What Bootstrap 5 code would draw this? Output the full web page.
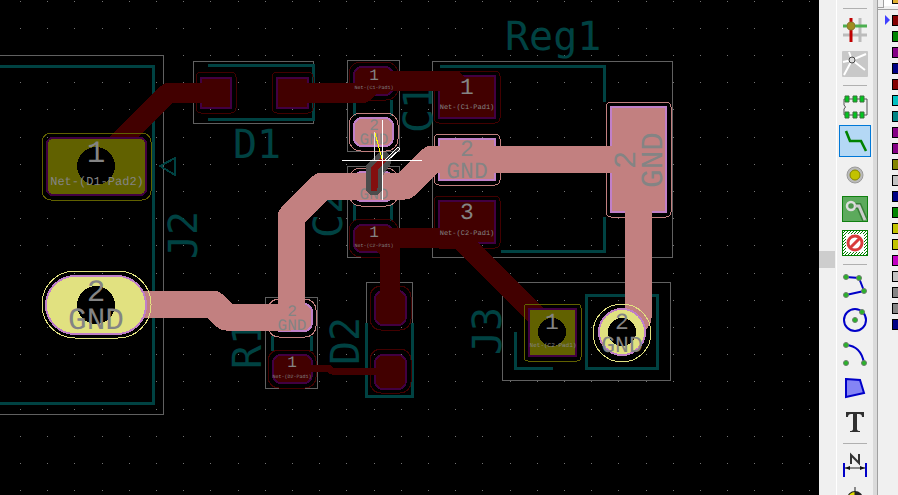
<!DOCTYPE html>
<html lang="en">
<head>
<meta charset="utf-8">
<meta name="viewport" content="width=device-width, initial-scale=1">
<title>PCB Editor</title>
<link href="https://cdn.jsdelivr.net/npm/bootstrap@5.3.0/dist/css/bootstrap.min.css" rel="stylesheet">
<style>
  body { background: #f0f0f0; font-family: "Liberation Sans", sans-serif; }
  .board { background: #000; min-width: 0; }
  .board svg { shape-rendering: crispEdges; }
  .board text { text-rendering: geometricPrecision; }
  /* board layers */
  .courtyard { fill: none; stroke: #606060; }
  .silk { fill: none; stroke: #004242; stroke-width: 3; }
  .silk-thin { stroke-width: 2; }
  .silk-text { fill: #004242; font: 40px "DejaVu Sans Mono", monospace; }
  .cu { fill: none; stroke: #420000; stroke-width: 20; stroke-linejoin: round; stroke-linecap: round; }
  .cu-thin { stroke-width: 7; }
  .gnd { fill: none; stroke: #c28080; stroke-width: 27; stroke-linejoin: round; stroke-linecap: round; }
  .pad-cu { fill: #420000; stroke: #420042; stroke-width: 2; }
  .pad-gnd { fill: #c28080; stroke: #c080c8; stroke-width: 2; }
  .pad-th { fill: #616100; stroke: #420042; stroke-width: 2; }
  .pad-thg { fill: #e1e180; stroke: #c080c8; stroke-width: 2; }
  .clr-cu { fill: none; stroke: #420000; }
  .clr-gnd { fill: none; stroke: #c28080; }
  .clr-th { fill: none; stroke: #616100; }
  .clr-thg { fill: none; stroke: #e1e180; }
  .lbl { fill: #848484; text-anchor: middle; font-family: "Liberation Mono", monospace; }
  .t5 { font-size: 5px; } .t6 { font-size: 6px; } .t7 { font-size: 7px; } .t12 { font-size: 12px; }
  .t16 { font-size: 16px; } .t23 { font-size: 23px; } .t31 { font-size: 31px; }
  /* side panels */
  .vscroll { width: 18px; border-right: 1px solid #fff; }
  .vscroll-thumb { height: 17px; margin-right: 1px; background: #cdcdcd; }
  .tools { width: 36px; padding-top: 3px; }
  .tool { width: 34px; height: 34px; padding: 1px; flex: none; border: 0; background: none; }
  .tool span { width: 32px; height: 32px; display: block; padding: 1px; border: 1px solid transparent; }
  .tool.chosen span { background: #b4d8f5; border-color: #0078d7; }
  .tool svg { width: 28px; height: 28px; display: block; }
  .rule { width: 24px; height: 1px; margin: 4px 0; background: #b0b0b0; flex: none; }
  .rule.first { margin-top: 5px; }
  .sash { width: 5px; background: #dadada; border-right: 1px solid #a0a0a0; }
  .layers { width: 20px; }
  .layer-tab { height: 10px; border-bottom: 1px solid #a0a0a0; }
  .tab-left { width: 6px; height: 8px; border: 1px solid #a0a0a0; border-width: 0 1px 1px 0; }
  .tab-body { height: 6px; background: #fff; }
  .tab-chip { width: 6px; height: 4px; background: #e0b030; border: 1px solid #111; border-width: 0 0 1px 1px; }
  .layer-list { padding-top: 2px; }
  .layer-row { height: 16px; padding: 0 0 0 6px; gap: 2px; border: 0; background: none; }
  .arrow { width: 6px; height: 10px; }
  .swatch { width: 8px; height: 11px; border: 1px solid #000; border-right: 0; flex: none; }
  .c-red { background: #840000; } .c-green { background: #008400; } .c-purple { background: #840084; }
  .c-navy { background: #000084; } .c-cyan { background: #00c2c2; } .c-teal { background: #008484; }
  .c-olive { background: #848400; } .c-silver { background: #c2c2c2; } .c-yellow { background: #c2c200; }
  .c-magenta { background: #c200c2; } .c-gray { background: #848484; }
</style>
<script src="https://cdn.jsdelivr.net/npm/bootstrap@5.3.0/dist/js/bootstrap.bundle.min.js"></script>
</head>
<body class="d-flex vh-100 overflow-hidden">
<main class="board flex-grow-1 overflow-hidden">
<svg class="w-100 h-100 d-block" role="img" aria-label="Board">
  <defs>
    <path id="dots" d="M0 0h1v1h-1zM27 0h1v1h-1zM54 0h1v1h-1zM82 0h1v1h-1zM109 0h1v1h-1z" fill="#747474"/>
    <pattern id="grid" x="20" y="28" width="136" height="136" patternUnits="userSpaceOnUse">
      <use href="#dots"/><use href="#dots" y="27"/><use href="#dots" y="54"/><use href="#dots" y="81"/><use href="#dots" y="109"/>
    </pattern>
  </defs>
  <rect width="100%" height="100%" fill="url(#grid)"/>

  <!-- courtyards -->
  <path class="courtyard" d="M-5 55H163V414H-5M193 61H313V123H193ZM347 60H399V151H347ZM347 166H399V257H347ZM432 61H672V257H432ZM265 297H317V388H265ZM366 282H412V397H366ZM502 282H670V380H502Z"/>

  <!-- silkscreen -->
  <path class="silk" d="M-5 66H153V403H-5"/>
  <path class="silk" d="M208 65H313V119H208M354 100V116M391 100V116M354 204V221M391 204V221M272 336V351M311 336V351M366 323V396H412V323"/>
  <path class="silk" d="M440 66H604V102M604 217V251H501M515 332V368H553M586 295H657V368H586Z"/>
  <path class="silk silk-thin" d="M160 166L175 158V175Z"/>
  <text class="silk-text" x="233" y="158">D1</text>
  <text class="silk-text" x="505" y="50">Reg1</text>
  <text class="silk-text" transform="translate(197 259) rotate(-90)">J2</text>
  <text class="silk-text" transform="translate(261 369) rotate(-90)">R1</text>
  <text class="silk-text" transform="translate(359 365) rotate(-90)">D2</text>
  <text class="silk-text" transform="translate(432 133) rotate(-90)">C1</text>
  <text class="silk-text" transform="translate(342 238) rotate(-90)">C2</text>
  <text class="silk-text" transform="translate(501 355) rotate(-90)">J3</text>

  <!-- surface pads -->
  <path class="pad-cu" d="M201 78H231V108H201ZM277 78H308V108H277ZM439 76H495V118H439ZM439 201H495V243H439Z"/>
  <rect class="pad-cu" x="354" y="67" width="39" height="28" rx="8"/>
  <rect class="pad-cu" x="354" y="225" width="39" height="27" rx="8"/>
  <rect class="pad-cu" x="375" y="291" width="31" height="34" rx="8"/>
  <rect class="pad-cu" x="375" y="355" width="31" height="34" rx="8"/>
  <rect class="pad-cu" x="273" y="355" width="39" height="28" rx="8"/>
  <path class="pad-gnd" d="M439 139H495V180H439ZM611 107H666V212H611Z"/>
  <rect class="pad-gnd" x="354" y="118" width="39" height="28" rx="8"/>
  <rect class="pad-gnd" x="354" y="172" width="39" height="29" rx="8"/>
  <rect class="pad-gnd" x="273" y="304" width="39" height="27" rx="8"/>

  <!-- clearance outlines -->
  <g class="clr-cu">
    <rect x="196" y="72" width="40" height="41" rx="5"/><rect x="272" y="72" width="41" height="41" rx="5"/>
    <rect x="434" y="71" width="66" height="52" rx="5"/><rect x="434" y="196" width="66" height="52" rx="5"/>
    <rect x="349" y="62" width="49" height="38" rx="12"/><rect x="349" y="219" width="49" height="38" rx="12"/>
    <rect x="370" y="286" width="41" height="44" rx="11"/><rect x="370" y="349" width="41" height="44" rx="11"/>
    <rect x="268" y="350" width="48" height="38" rx="11"/>
  </g>
  <g class="clr-gnd">
    <rect x="434" y="134" width="66" height="51" rx="5"/><rect x="606" y="102" width="65" height="115" rx="5"/>
    <rect x="349" y="113" width="49" height="38" rx="12"/><rect x="349" y="168" width="49" height="38" rx="12"/>
    <rect x="268" y="299" width="48" height="38" rx="11"/>
  </g>

  <!-- tracks -->
  <path class="cu" d="M109 152L168 93H216M292 93H363L375 81H455M374 238H459L552 331M378 238L390 250V308"/>
  <path class="cu cu-thin" d="M292 368H328L332 371H390"/>
  <path class="gnd" d="M96 304H213L226 317H291V217L322 186H405L432 159H638V318L626 332"/>

  <!-- through-hole pads -->
  <rect class="pad-th" x="47" y="138" width="99" height="57" rx="6"/><rect class="clr-th" x="42" y="133" width="109" height="67" rx="9"/>
  <circle cx="96" cy="166" r="19"/>
  <rect class="pad-thg" x="46" y="276" width="100" height="58" rx="29"/><rect class="clr-thg" x="42" y="271" width="109" height="67" rx="33"/>
  <circle cx="96" cy="305" r="19"/>
  <rect class="pad-th" x="529" y="309" width="47" height="47"/><rect class="clr-th" x="524" y="304" width="57" height="57" rx="4"/>
  <circle cx="552" cy="332" r="14"/>
  <circle class="pad-thg" cx="622" cy="332" r="23"/><circle class="clr-thg" cx="622" cy="333" r="29"/>
  <circle cx="622" cy="332" r="14"/>

  <!-- pad numbers and nets -->
  <g class="lbl">
    <g class="t31">
      <text x="96" y="162">1</text><text x="96" y="301">2</text><text x="96" y="329">GND</text>
      <text transform="translate(635 160) rotate(-90)">2</text><text transform="translate(662 160) rotate(-90)">GND</text>
    </g>
    <g class="t23">
      <text x="467" y="94">1</text><text x="467" y="156">2</text><text x="467" y="178">GND</text><text x="467" y="219">3</text>
      <text x="552" y="329">1</text><text x="622" y="329">2</text><text x="622" y="352">GND</text>
    </g>
    <g class="t16">
      <text x="374" y="80">1</text><text x="374" y="130">2</text><text x="374" y="144">GND</text><text x="374" y="199">GND</text>
      <text x="374" y="237">1</text><text x="292" y="316">2</text><text x="292" y="330">GND</text><text x="292" y="367">1</text>
    </g>
    <text class="t12" x="97" y="185">Net-(D1-Pad2)</text>
    <text class="t7" x="467" y="109">Net-(C1-Pad1)</text>
    <text class="t7" x="467" y="235">Net-(C2-Pad1)</text>
    <text class="t6" x="553" y="347">Net-(C2-Pad1)</text>
    <text class="t5" x="374" y="89">Net-(C1-Pad1)</text>
    <text class="t5" x="374" y="247">Net-(C2-Pad1)</text>
    <text class="t5" x="292" y="378">Net-(D2-Pad1)</text>
  </g>

  <!-- track being routed, ratsnest line and cursor -->
  <g fill="none" stroke-linecap="round" stroke-linejoin="round">
    <path d="M374 174L383 160" stroke="#606060" stroke-opacity=".75" stroke-width="17"/>
    <path d="M374 187V169L380 164" stroke="#4c4c4c" stroke-width="17"/>
    <path d="M374 188V169L382 161" stroke="#840f0f" stroke-width="7"/>
  </g>
  <path d="M374 132V160" stroke="#ddd"/>
  <path d="M375 133L382 159" stroke="#ff0" stroke-width="1"/>
  <path d="M342 160H422M382 120V200" stroke="#fff"/>
  <path d="M385 160L398 147L400 149L387 161Z" fill="#333" stroke="#fff"/>
</svg>
</main>

<div class="vscroll d-flex flex-column justify-content-center flex-shrink-0 pt-4"><div class="vscroll-thumb"></div></div>

<nav class="tools d-flex flex-column align-items-center overflow-hidden flex-shrink-0" aria-label="Tools">
  <div class="rule first"></div>
  <button class="tool" type="button" aria-label="Highlight net"><span><svg viewBox="0 0 28 28"><path d="M2 19H26M19 2V26" stroke="#bcbcbc" stroke-width="3"/><path d="M10 2V26" stroke="#c00000" stroke-width="3"/><path d="M2 10H26" stroke="#4caf50" stroke-width="3"/><circle cx="10" cy="10" r="4" fill="#a08c20" stroke="#8a7930"/></svg></span></button>
  <button class="tool" type="button" aria-label="Local ratsnest"><span><svg viewBox="0 0 28 28"><rect x="1" y="1" width="26" height="26" rx="1" fill="#c8c8c8"/><path d="M11 10L8 2M11 10L2 12M11 10L25 4M11 10L24 20M11 10L3 25" stroke="#fff" stroke-width="2"/><circle cx="11" cy="10" r="3" fill="#ddd" stroke="#484848"/></svg></span></button>
  <div class="rule"></div>
  <button class="tool" type="button" aria-label="Add footprint"><span><svg viewBox="0 0 28 28"><path d="M3 6H26V22H3V16Q6 14 3 12Z" fill="none" stroke="#555"/><path d="M4 3H8V9H4ZM12 3H16V9H12ZM19 3H23V9H19ZM4 19H8V25H4ZM12 19H16V25H12ZM19 19H23V25H19Z" fill="#00c81e" stroke="#3c6e3c"/></svg></span></button>
  <button class="tool chosen" type="button" aria-label="Route tracks"><span><svg viewBox="0 0 28 28"><path d="M5 4L9 14H20L25 24" fill="none" stroke="#008200" stroke-width="2.6"/></svg></span></button>
  <button class="tool" type="button" aria-label="Add via"><span><svg viewBox="0 0 28 28"><circle cx="14" cy="14" r="8" fill="#bbb" stroke="#9a9a9a"/><circle cx="14" cy="14" r="5" fill="#c2c200" stroke="#848400"/></svg></span></button>
  <button class="tool" type="button" aria-label="Add filled zone"><span><svg viewBox="0 0 28 28"><rect x="1.500" y="1.500" width="25" height="25" fill="#5caa5c" stroke="#108010"/><path d="M10 11H18L24 25" fill="none" stroke="#388038" stroke-width="6"/><circle cx="10" cy="11" r="4" fill="#4c964c" stroke="#ddd" stroke-width="2.500"/><path d="M14 11H18L24 25" fill="none" stroke="#ccc" stroke-width="3"/></svg></span></button>
  <button class="tool" type="button" aria-label="Add keepout area"><span><svg viewBox="0 0 28 28"><defs><pattern id="hatch" width="3" height="3" patternUnits="userSpaceOnUse"><path d="M0 3L3 0" stroke="#008000"/></pattern></defs><rect x="1.500" y="1.500" width="25" height="25" fill="#fff"/><rect x="1.500" y="1.500" width="25" height="25" fill="url(#hatch)" stroke="#008000"/><rect x="5" y="5" width="18" height="18" fill="#fff"/><circle cx="14" cy="14" r="7" fill="#fff" stroke="#d83c3c" stroke-width="3"/><path d="M9 19L19 9" stroke="#d83c3c" stroke-width="3"/></svg></span></button>
  <div class="rule"></div>
  <button class="tool" type="button" aria-label="Draw lines"><span><svg viewBox="0 0 28 28"><path d="M5 5L18 6L23 19L5 23" fill="none" stroke="#0000c8" stroke-width="2"/><g fill="#28b428" stroke="#6e7e6e"><circle cx="5" cy="5" r="2.5"/><circle cx="18" cy="6" r="2.5"/><circle cx="23" cy="19" r="2.5"/><circle cx="5" cy="23" r="2.5"/></g></svg></span></button>
  <button class="tool" type="button" aria-label="Draw circle"><span><svg viewBox="0 0 28 28"><circle cx="14" cy="14" r="11" fill="none" stroke="#0000c8" stroke-width="2"/><g fill="#28b428" stroke="#6e7e6e"><circle cx="14" cy="14" r="2.5"/><circle cx="21" cy="6" r="2.5"/></g></svg></span></button>
  <button class="tool" type="button" aria-label="Draw arc"><span><svg viewBox="0 0 28 28"><path d="M5 5Q20 6 23 23" fill="none" stroke="#0000c8" stroke-width="2"/><g fill="#28b428" stroke="#6e7e6e"><circle cx="5" cy="5" r="2.5"/><circle cx="5" cy="23" r="2.5"/><circle cx="23" cy="23" r="2.5"/></g></svg></span></button>
  <button class="tool" type="button" aria-label="Draw polygon"><span><svg viewBox="0 0 28 28"><path d="M5 5L19 6L23 19L5 23Z" fill="#8484f5" stroke="#0000c8" stroke-width="2"/></svg></span></button>
  <button class="tool" type="button" aria-label="Add text"><span><svg viewBox="0 0 28 28"><path d="M5 4H23V9H21Q21 6 18 6H16V21Q16 23 19 23V24H9V23Q12 23 12 21V6H10Q7 6 7 9H5Z" fill="#303030"/></svg></span></button>
  <div class="rule"></div>
  <button class="tool" type="button" aria-label="Add dimension"><span><svg viewBox="0 0 28 28"><path d="M3 12V26M25 12V26" stroke="#0000c8" stroke-width="2"/><path d="M4 17H24" stroke="#222"/><path d="M4 17L9 15V19ZM24 17L19 15V19Z" fill="#111"/><path d="M10 13V4L18 12V3" fill="none" stroke="#333" stroke-width="2"/></svg></span></button>
  <button class="tool" type="button" aria-label="Add alignment target"><span><svg viewBox="0 0 28 28"><circle cx="14" cy="14" r="8" fill="#222"/><path d="M14 14V7A7 7 0 0 0 7 14Z" fill="#e0dc00"/><path d="M14 2V26M2 14H26" stroke="#222"/></svg></span></button>
</nav>

<div class="sash flex-shrink-0"></div>

<aside class="layers flex-shrink-0 overflow-hidden" aria-label="Layers">
  <div class="layer-tab d-flex"><div class="tab-left"></div><div class="tab-body flex-grow-1 d-flex justify-content-end"><div class="tab-chip"></div></div></div>
  <div id="layerList" class="layer-list d-flex flex-column"></div>
</aside>
<script>
  const layers = ['red','green','purple','navy','red','cyan','teal','purple','purple','olive','silver','navy','green','yellow','yellow','magenta','silver','gray','gray','navy'];
  const list = document.getElementById('layerList');
  layers.forEach((name, i) => {
    const row = document.createElement('button');
    row.type = 'button';
    row.className = 'layer-row d-flex align-items-center';
    row.setAttribute('aria-label', 'Layer ' + (i + 1));
    row.innerHTML = '<svg class="arrow flex-shrink-0" viewBox="0 0 6 10">' + (i ? '' : '<path d="M1 0L6 5L1 10Z" fill="#4040ff"/>') + '</svg><i class="swatch c-' + name + '"></i>';
    list.append(row);
  });
</script>
</body>
</html>
